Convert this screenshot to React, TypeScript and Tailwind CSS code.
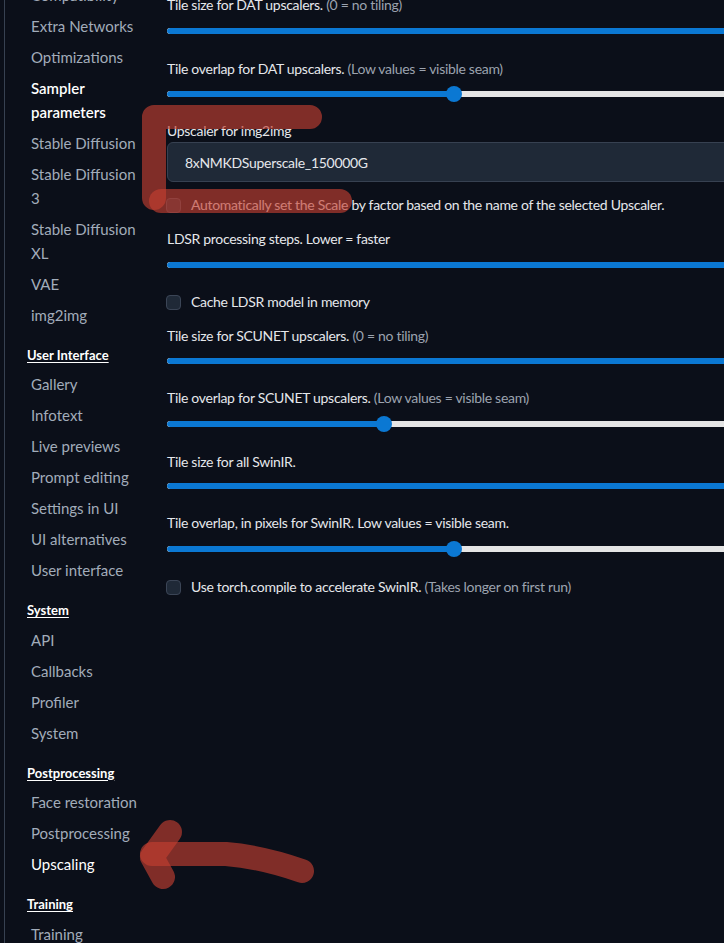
import { FC } from "react";

type NavItem = { lines: string[]; active?: boolean; bold?: boolean };
type NavGroup = { title?: string; items: NavItem[] };

const nav: NavGroup[] = [
  {
    items: [
      { lines: ["Compatibility"] },
      { lines: ["Extra Networks"] },
      { lines: ["Optimizations"] },
      { lines: ["Sampler", "parameters"], active: true, bold: true },
      { lines: ["Stable Diffusion"] },
      { lines: ["Stable Diffusion", "3"] },
      { lines: ["Stable Diffusion", "XL"] },
      { lines: ["VAE"] },
      { lines: ["img2img"] },
    ],
  },
  {
    title: "User Interface",
    items: [
      { lines: ["Gallery"] },
      { lines: ["Infotext"] },
      { lines: ["Live previews"] },
      { lines: ["Prompt editing"] },
      { lines: ["Settings in UI"] },
      { lines: ["UI alternatives"] },
      { lines: ["User interface"] },
    ],
  },
  {
    title: "System",
    items: [{ lines: ["API"] }, { lines: ["Callbacks"] }, { lines: ["Profiler"] }, { lines: ["System"] }],
  },
  {
    title: "Postprocessing",
    items: [{ lines: ["Face restoration"] }, { lines: ["Postprocessing"] }, { lines: ["Upscaling"], active: true }],
  },
  {
    title: "Training",
    items: [{ lines: ["Training"] }],
  },
];

const Sidebar: FC = () => (
  <div className="w-[146px] flex-none ml-[4px] border-l border-[#374151] mt-[-21px]">
    {nav.map((group, gi) => (
      <div key={gi}>
        {group.title && (
          <div className="pl-[22px] pt-[14.5px] pb-[4px] text-[13px] leading-[20px] font-bold text-white underline underline-offset-2">
            {group.title}
          </div>
        )}
        {group.items.map((item, ii) => (
          <div
            key={ii}
            className={`pl-[26px] py-[3.5px] text-[15px] leading-[24px] ${
              item.active ? "text-white" : "text-[#a2acba]"
            } ${item.bold ? "font-semibold" : ""}`}
          >
            {item.lines.map((l, li) => (
              <div key={li} className="whitespace-nowrap">
                {l}
              </div>
            ))}
          </div>
        ))}
      </div>
    ))}
  </div>
);

const Label: FC<{ text: string; hint?: string; mt: string }> = ({ text, hint, mt }) => (
  <div className={`${mt} text-[14px] leading-[20px] tracking-[-0.3px] text-[#e5e7eb] whitespace-nowrap`}>
    {text}
    {hint && <span className="text-[#9ca3af]"> {hint}</span>}
  </div>
);

const Slider: FC<{ fill: number; mt: string }> = ({ fill, mt }) => (
  <div className={`${mt} relative h-[16px] w-[600px] flex items-center`}>
    <div className="h-[6px] w-full rounded-full bg-[#e5e5e5] overflow-hidden flex">
      <div className="h-full bg-[#0b78d3] rounded-full" style={{ width: `${fill * 100}%` }} />
    </div>
    {fill < 1 && (
      <div
        className="absolute top-0 h-[16px] w-[16px] -ml-[8px] rounded-full bg-[#0b78d3]"
        style={{ left: `${fill * 100}%` }}
      />
    )}
  </div>
);

const Check: FC<{ text: string; hint?: string; mt: string }> = ({ text, hint, mt }) => (
  <div className={`${mt} flex items-center gap-[10px] h-[20px] whitespace-nowrap`}>
    <div className="h-[15px] w-[15px] -ml-[1px] rounded-[4px] bg-[#1f2937] border border-[#3b4556]" />
    <div className="text-[14px] leading-[20px] tracking-[-0.3px] text-[#e5e7eb]">
      {text}
      {hint && <span className="text-[#9ca3af]"> {hint}</span>}
    </div>
  </div>
);

const Settings: FC = () => (
  <div className="flex-none w-[600px] ml-[17px] mt-[-5px] flex flex-col">
    <Label mt="mt-0" text="Tile size for DAT upscalers." hint="(0 = no tiling)" />
    <Slider mt="mt-[8px]" fill={1} />
    <Label mt="mt-[20px]" text="Tile overlap for DAT upscalers." hint="(Low values = visible seam)" />
    <Slider mt="mt-[7px]" fill={287 / 600} />
    <Label mt="mt-[19px]" text="Upscaler for img2img" />
    <div className="mt-[1px] h-[40px] flex items-center pl-[17px] rounded-md bg-[#1f2937] border border-[#374151] text-[14px] tracking-[-0.3px] text-[#e5e7eb]">
      8xNMKDSuperscale_150000G
    </div>
    <Check mt="mt-[13px]" text="Automatically set the Scale by factor based on the name of the selected Upscaler." />
    <Label mt="mt-[14px]" text="LDSR processing steps. Lower = faster" />
    <Slider mt="mt-[8px]" fill={1} />
    <Check mt="mt-[19px]" text="Cache LDSR model in memory" />
    <Label mt="mt-[14px]" text="Tile size for SCUNET upscalers." hint="(0 = no tiling)" />
    <Slider mt="mt-[7px]" fill={1} />
    <Label mt="mt-[19px]" text="Tile overlap for SCUNET upscalers." hint="(Low values = visible seam)" />
    <Slider mt="mt-[8px]" fill={217 / 600} />
    <Label mt="mt-[20px]" text="Tile size for all SwinIR." />
    <Slider mt="mt-[6px]" fill={1} />
    <Label mt="mt-[19px]" text="Tile overlap, in pixels for SwinIR. Low values = visible seam." />
    <Slider mt="mt-[8px]" fill={287 / 600} />
    <Check mt="mt-[20px]" text="Use torch.compile to accelerate SwinIR." hint="(Takes longer on first run)" />
  </div>
);

// hand-drawn red marks on top of the screenshot
const Marks: FC = () => (
  <svg className="absolute inset-0 pointer-events-none" width="724" height="943" viewBox="0 0 724 943">
    <g fill="none" stroke="rgb(196,62,48)" strokeWidth="24" strokeLinecap="round" strokeLinejoin="round">
      <path d="M310 117 L154 117 L154 198" opacity="0.64" />
      <path d="M161 201 L340 201" opacity="0.64" />
      <path d="M302 871 Q262 857 226 854 L152 854" opacity="0.64" />
      <path d="M170 832 L152 857 L163 877" opacity="0.64" />
    </g>
  </svg>
);

export default function App() {
  return (
    <div
      className="relative w-[724px] h-[943px] overflow-hidden bg-[#0b0f19] flex items-start"
      style={{ fontFamily: "Lato, 'Noto Sans', sans-serif" }}
    >
      <Sidebar />
      <Settings />
      <Marks />
    </div>
  );
}
